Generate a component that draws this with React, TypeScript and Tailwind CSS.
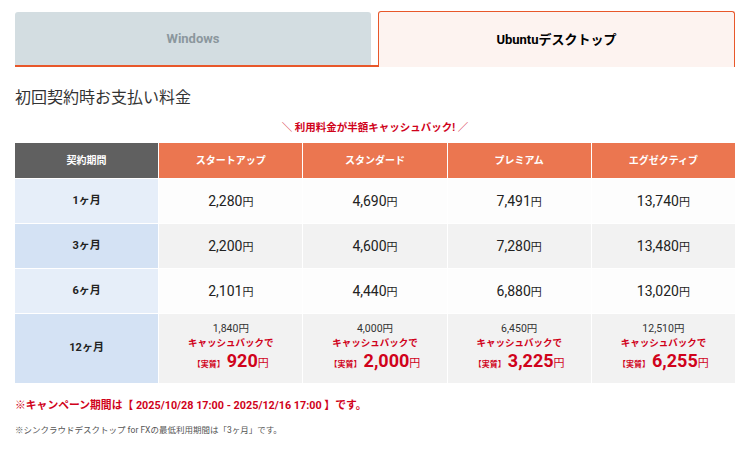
const plans = ["スタートアップ", "スタンダード", "プレミアム", "エグゼクティブ"];

const rows = [
  { label: "1ヶ月", prices: ["2,280", "4,690", "7,491", "13,740"] },
  { label: "3ヶ月", prices: ["2,200", "4,600", "7,280", "13,480"] },
  { label: "6ヶ月", prices: ["2,101", "4,440", "6,880", "13,020"] },
];

const yearly = [
  { base: "1,840", real: "920" },
  { base: "4,000", real: "2,000" },
  { base: "6,450", real: "3,225" },
  { base: "12,510", real: "6,255" },
];

const jp = "font-['Roboto','Noto_Sans_CJK_JP',sans-serif]";

const App = () => {
  return (
    <div className={`w-[751px] h-[451px] bg-white pl-[15px] pr-[16px] pt-[11px] text-[#333] ${jp}`}>
      {/* tabs */}
      <div className="flex items-end">
        <div className="flex-1 border-b-2 border-[#e8572a] pr-[7px]">
          <div className="h-[53px] rounded-t-[3px] bg-[#d3dde1] flex items-center justify-center text-[13px] font-bold text-[#8b979d]">
            Windows
          </div>
        </div>
        <div className="w-[357px] h-[56px] rounded-t-[3px] border border-b-0 border-[#e8572a] bg-[#fdf3f0] flex items-center justify-center text-[13px] font-bold text-black">
          Ubuntuデスクトップ
        </div>
      </div>

      <h2 className="mt-[19px] text-[16px] leading-[24px] text-[#333]">初回契約時お支払い料金</h2>

      <p className="mt-[10px] text-center text-[10.5px] leading-[16px] font-bold text-[#d0021b]">
        <span className="font-normal">＼</span> 利用料金が半額キャッシュバック! <span className="font-normal">／</span>
      </p>

      {/* price table */}
      <div className="mt-[7px] grid grid-cols-5 gap-px bg-white">
        <div className="h-[35px] bg-[#606060] flex items-center justify-center text-[10px] font-bold text-white">
          契約期間
        </div>
        {plans.map((p) => (
          <div key={p} className="h-[35px] bg-[#eb7650] flex items-center justify-center text-[10px] font-bold text-white">
            {p}
          </div>
        ))}

        {rows.map((r, i) => (
          <div key={r.label} className="contents">
            <div
              className={`h-[44px] flex items-center justify-center text-[11px] font-bold text-[#222] ${
                i % 2 === 0 ? "bg-[#e6eef9]" : "bg-[#d4e2f4]"
              }`}
            >
              {r.label}
            </div>
            {r.prices.map((p, j) => (
              <div
                key={j}
                className={`h-[44px] flex items-center justify-center text-[14px] text-[#222] ${
                  i % 2 === 0 ? "bg-[#fdfdfd]" : "bg-[#f2f2f2]"
                }`}
              >
                <span>
                  {p}
                  <span className="text-[11px]">円</span>
                </span>
              </div>
            ))}
          </div>
        ))}

        <div className="h-[69px] bg-[#d4e2f4] flex items-center justify-center text-[11px] font-bold text-[#222]">
          12ヶ月
        </div>
        {yearly.map((y) => (
          <div key={y.base} className="h-[69px] bg-[#f2f2f2] flex flex-col items-center justify-center">
            <div className="text-[10.5px] leading-[14px] text-[#333]">
              {y.base}
              <span>円</span>
            </div>
            <div className="text-[9.5px] leading-[14px] font-bold text-[#d0021b]">キャッシュバックで</div>
            <div className="flex items-baseline text-[#d0021b] leading-[22px]">
              <span className="text-[8px] font-bold">【実質】</span>
              <span className="text-[18px] font-bold ml-[2px]">{y.real}</span>
              <span className="text-[11px]">円</span>
            </div>
          </div>
        ))}
      </div>

      <p className="mt-[15px] text-[10.8px] leading-[16px] font-bold text-[#d0021b]">
        ※キャンペーン期間は【 2025/10/28 17:00 - 2025/12/16 17:00 】です。
      </p>
      <p className="mt-[10px] text-[8.5px] leading-[12px] text-[#555]">
        ※シンクラウドデスクトップ for FXの最低利用期間は「3ヶ月」です。
      </p>
    </div>
  );
};

export default App;
